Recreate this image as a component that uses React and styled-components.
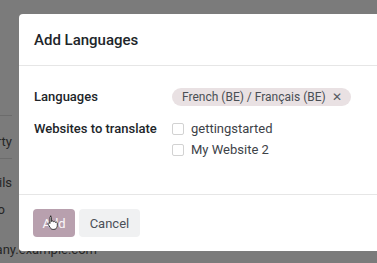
import React from 'react';
import styled, { createGlobalStyle } from 'styled-components';

const GlobalStyle = createGlobalStyle`
  html, body {
    margin: 0;
    padding: 0;
    overflow: hidden;
    background: #7b7b7b;
    font-family: Roboto, "Liberation Sans", Arial, sans-serif;
  }
`;

const Page = styled.div`
  position: relative;
  width: 377px;
  height: 263px;
  overflow: hidden;
  background: #7b7b7b;
`;

const Backdrop = styled.div`
  display: flex;
  flex-direction: column;
  padding-top: 115px;
  color: #262626;
  font-size: 13px;
  line-height: 16px;
`;

const BackRow = styled.div`
  display: flex;
  justify-content: flex-end;
  width: ${(p) => p.$end}px;
  margin-top: ${(p) => p.$mt || 0}px;
  padding-top: ${(p) => p.$pt || 0}px;
  white-space: nowrap;
  border-top: ${(p) => (p.$line ? '1px solid #6c6c6c' : 'none')};
`;

const Modal = styled.div`
  position: absolute;
  left: 19px;
  top: 14px;
  width: 400px;
  height: 237px;
  background: #fff;
  border-radius: 4px 0 0 3px;
  display: flex;
  flex-direction: column;
`;

const Header = styled.div`
  height: 51px;
  display: flex;
  align-items: center;
  padding: 0 15px;
  border-bottom: 1px solid #e6e6e6;
`;

const Title = styled.h4`
  margin: 0;
  font-size: 15px;
  font-weight: 500;
  color: #212529;
`;

const Body = styled.div`
  flex: 1;
  display: grid;
  grid-template-columns: 138px 1fr;
  row-gap: 12px;
  align-content: start;
  padding: 22px 15px 0;
`;

const Label = styled.div`
  font-size: 13px;
  font-weight: 500;
  color: #212529;
  line-height: ${(p) => p.$lh}px;
`;

const Tag = styled.span`
  display: inline-flex;
  align-items: center;
  gap: 6px;
  height: 18px;
  padding: 0 9px 0 10px;
  border-radius: 9px;
  background: #e9e1e3;
  color: #4a4f55;
  font-size: 12px;
  justify-self: start;
`;

const Close = styled.span`
  font-size: 12px;
  color: #555a60;
`;

const Options = styled.div`
  display: flex;
  flex-direction: column;
`;

const Option = styled.label`
  display: flex;
  align-items: center;
  gap: 7px;
  height: 21px;
  font-size: 13px;
  color: #3d4248;
`;

const Box = styled.span`
  width: 10px;
  height: 10px;
  border: 1px solid #d2d2d2;
  border-radius: 2px;
  background: #fff;
`;

const Footer = styled.div`
  display: flex;
  gap: 4px;
  padding: 14px 14px;
  border-top: 1px solid #e6e6e6;
`;

const Button = styled.button`
  position: relative;
  height: 28px;
  padding: 0 ${(p) => (p.$primary ? 9.5 : 10.5)}px;
  border: none;
  border-radius: 4px;
  font-family: inherit;
  font-size: 13px;
  background: ${(p) => (p.$primary ? '#b8a0ae' : '#f0f1f2')};
  color: ${(p) => (p.$primary ? '#fbf8fa' : '#4b5058')};
`;

const Cursor = styled.svg`
  position: absolute;
  left: 14px;
  top: 6px;
`;

const Hand = () => (
  <Cursor width="12" height="15" viewBox="0 0 12 15">
    <path
      d="M3.2 1.2c.7 0 1.2.5 1.2 1.2v4.1c.2-.5.7-.7 1.2-.6.5.1.8.5.8 1 .2-.4.7-.6 1.2-.5.5.1.8.5.8 1 .3-.3.7-.4 1.1-.3.5.2.8.6.8 1.1v2.6c0 1.9-1.4 3.6-3.4 3.6H6c-1.2 0-2.1-.6-2.7-1.6L1.2 9.3c-.3-.5-.1-1.1.4-1.4.5-.2 1 0 1.3.4l.1.2V2.4c0-.7.5-1.2 1.2-1.2z"
      fill="#fff"
      stroke="#222"
      strokeWidth="0.9"
      strokeLinejoin="round"
    />
  </Cursor>
);

export default function App() {
  return (
    <Page>
      <GlobalStyle />
      <Backdrop>
        <BackRow $end={12} $pt={18} $line>Property</BackRow>
        <BackRow $end={12} $mt={8} $pt={16} $line>Details</BackRow>
        <BackRow $end={5} $mt={11}>Logo</BackRow>
        <BackRow $end={97} $mt={24}>company.example.com</BackRow>
      </Backdrop>
      <Modal>
        <Header>
          <Title>Add Languages</Title>
        </Header>
        <Body>
          <Label $lh={18}>Languages</Label>
          <Tag>
            French (BE) / Français (BE)
            <Close>✕</Close>
          </Tag>
          <Label $lh={21}>Websites to translate</Label>
          <Options>
            <Option>
              <Box />
              gettingstarted
            </Option>
            <Option>
              <Box />
              My Website 2
            </Option>
          </Options>
        </Body>
        <Footer>
          <Button $primary>
            Add
            <Hand />
          </Button>
          <Button>Cancel</Button>
        </Footer>
      </Modal>
    </Page>
  );
}
